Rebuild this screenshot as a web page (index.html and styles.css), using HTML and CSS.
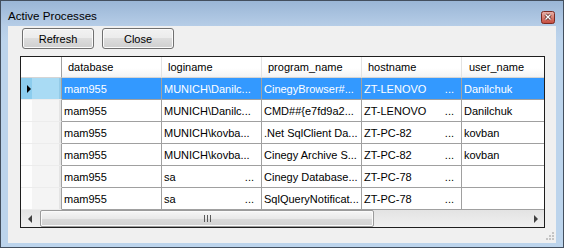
FILE: index.html
```html
<!DOCTYPE html>
<html lang="en">
  <head>
    <meta charset="UTF-8" />
    <title>Active Processes</title>
    <link rel="stylesheet" href="styles.css">
  </head>
  <body>
    <div class="window">
      <div class="titlebar">
        <span class="title">Active Processes</span>
        <span class="close-x">
          <svg width="14" height="13" viewBox="0 0 14 13">
            <defs>
              <linearGradient id="xg" x1="0" y1="0" x2="0" y2="1">
                <stop offset="0" stop-color="#e9b3ab" />
                <stop offset="0.5" stop-color="#d77e71" />
                <stop offset="1" stop-color="#c5483b" />
              </linearGradient>
            </defs>
            <rect x="0.5" y="0.5" width="13" height="12" rx="2" fill="url(#xg)" stroke="#7b2a22" />
            <path d="M4.5 3.5 L9.5 8.5 M9.5 3.5 L4.5 8.5" stroke="#5b2a26" stroke-width="3" />
            <path d="M4.5 3.5 L9.5 8.5 M9.5 3.5 L4.5 8.5" stroke="#ffffff" stroke-width="1.4" />
          </svg>
        </span>
      </div>
      <div class="client">
        <div class="toolbar">
          <button class="btn">Refresh</button>
          <button class="btn">Close</button>
        </div>
        <div class="grid">
          <div class="row head">
            <div class="cell rowhead"></div>
            <div class="cell">database</div>
            <div class="cell">loginame</div>
            <div class="cell">program_name</div>
            <div class="cell">hostname</div>
            <div class="cell last">user_name</div>
          </div>
          <div class="row selected">
            <div class="cell rowhead"><span class="pointer"></span></div>
            <div class="cell">mam955</div>
            <div class="cell">MUNICH\Danilc...</div>
            <div class="cell">CinegyBrowser#...</div>
            <div class="cell split"><span>ZT-LENOVO</span><span>...</span></div>
            <div class="cell last">Danilchuk</div>
          </div>
          <div class="row">
            <div class="cell rowhead"></div>
            <div class="cell">mam955</div>
            <div class="cell">MUNICH\Danilc...</div>
            <div class="cell">CMD##{e7fd9a2...</div>
            <div class="cell split"><span>ZT-LENOVO</span><span>...</span></div>
            <div class="cell last">Danilchuk</div>
          </div>
          <div class="row">
            <div class="cell rowhead"></div>
            <div class="cell">mam955</div>
            <div class="cell">MUNICH\kovba...</div>
            <div class="cell">.Net SqlClient Da...</div>
            <div class="cell split"><span>ZT-PC-82</span><span>...</span></div>
            <div class="cell last">kovban</div>
          </div>
          <div class="row">
            <div class="cell rowhead"></div>
            <div class="cell">mam955</div>
            <div class="cell">MUNICH\kovba...</div>
            <div class="cell">Cinegy Archive S...</div>
            <div class="cell split"><span>ZT-PC-82</span><span>...</span></div>
            <div class="cell last">kovban</div>
          </div>
          <div class="row">
            <div class="cell rowhead"></div>
            <div class="cell">mam955</div>
            <div class="cell split"><span>sa</span><span>...</span></div>
            <div class="cell">Cinegy Database...</div>
            <div class="cell split"><span>ZT-PC-78</span><span>...</span></div>
            <div class="cell last"></div>
          </div>
          <div class="row">
            <div class="cell rowhead"></div>
            <div class="cell">mam955</div>
            <div class="cell split"><span>sa</span><span>...</span></div>
            <div class="cell">SqlQueryNotificat...</div>
            <div class="cell split"><span>ZT-PC-78</span><span>...</span></div>
            <div class="cell last"></div>
          </div>
          <div class="hscroll">
            <span class="arrow"><span class="tri-left"></span></span>
            <div class="track">
              <div class="thumb"><span class="grip-lines"></span></div>
            </div>
            <span class="arrow"><span class="tri-right"></span></span>
          </div>
        </div>
        <svg class="size-grip" width="10" height="10" viewBox="0 0 10 10">
          <rect x="7" y="1" width="2" height="2" fill="#c4c4c4" />
          <rect x="4" y="4" width="2" height="2" fill="#c4c4c4" />
          <rect x="7" y="4" width="2" height="2" fill="#c4c4c4" />
          <rect x="1" y="7" width="2" height="2" fill="#c4c4c4" />
          <rect x="4" y="7" width="2" height="2" fill="#c4c4c4" />
          <rect x="7" y="7" width="2" height="2" fill="#c4c4c4" />
        </svg>
      </div>
    </div>
  </body>
</html>
```

FILE: styles.css
```css
* {
  padding: 0;
  margin: 0;
  box-sizing: border-box;
}
body {
  background-color: #ffffff;
  font-family: "Liberation Sans", Arial, sans-serif;
  font-size: 11px;
}
.window {
  display: flex;
  flex-direction: column;
  width: 564px;
  height: 248px;
  border: 1px solid #434f5e;
  padding: 0 7px 4px 7px;
  background: linear-gradient(#9ab6d6, #b6cde7 25px, #bcd4ec 40px, #bcd4ec);
}
.titlebar {
  display: flex;
  justify-content: space-between;
  align-items: flex-start;
  height: 25px;
}
.title {
  padding-top: 8px;
  font-size: 11.6px;
  line-height: 14px;
  color: #000000;
}
.close-x {
  display: block;
  width: 14px;
  height: 13px;
  margin-top: 10px;
  margin-right: 1px;
}
.close-x svg {
  display: block;
}
.client {
  position: relative;
  flex: 1;
  padding: 2px 0 0 12px;
  background-color: #f0f0f0;
}
/* buttons */
.toolbar {
  display: flex;
  gap: 8px;
  margin-left: 2px;
  margin-bottom: 7px;
}
.btn {
  width: 72px;
  height: 21px;
  border: 1px solid #707070;
  border-radius: 3px;
  background: linear-gradient(#f2f2f2, #ebebeb 50%, #dddddd 50%, #cfcfcf);
  box-shadow: inset 0 0 0 1px #fbfbfb;
  font-family: "Liberation Sans", Arial, sans-serif;
  font-size: 11px;
  color: #000000;
}
/* grid */
.grid {
  width: 525px;
  height: 172px;
  border: 1px solid #1e1e1e;
  background-color: #ffffff;
  overflow: hidden;
}
.row {
  display: grid;
  grid-template-columns: 41px 100px 100px 100px 100px 82px;
  height: 22px;
}
.cell {
  display: flex;
  align-items: center;
  padding: 0 7px 0 2px;
  border-right: 1px solid #a0a0a0;
  border-bottom: 1px solid #a0a0a0;
  white-space: nowrap;
  overflow: hidden;
  color: #000000;
}
.cell.last {
  border-right: none;
}
.split {
  justify-content: space-between;
}
.rowhead {
  position: relative;
  padding: 0;
  border-right-color: #a0a0a0;
  border-bottom-color: #ececec;
  background: linear-gradient(to right, #fdfdfd 0 11px, #f4f4f4 11px 38px, #e4e4e4 38px);
}
.row.head {
  height: 21px;
}
.head .cell {
  padding-left: 6px;
  border-right-color: #e3e3e3;
  border-bottom-color: #d5d5d5;
  background: linear-gradient(#ffffff, #ffffff 55%, #f3f3f3);
}
.head .cell.last {
  padding-left: 7px;
}
.head .rowhead {
  border-right-color: #a0a0a0;
  background: #ffffff;
}
.selected .cell {
  background-color: #3399ff;
  color: #ffffff;
}
.selected .rowhead {
  background: linear-gradient(to right, #8ccdee 0 11px, #a9dbf4 11px 38px, #93cbe8 38px);
}
.pointer {
  position: absolute;
  left: 6px;
  top: 7px;
  width: 0;
  height: 0;
  border-top: 4px solid transparent;
  border-bottom: 4px solid transparent;
  border-left: 4px solid #000000;
}
/* horizontal scrollbar */
.hscroll {
  display: flex;
  height: 17px;
  background: linear-gradient(#e3e3e3, #f0f0f0);
}
.arrow {
  display: flex;
  align-items: center;
  justify-content: center;
  width: 17px;
}
.tri-left {
  width: 0;
  height: 0;
  border-top: 4px solid transparent;
  border-bottom: 4px solid transparent;
  border-right: 4px solid #404040;
}
.tri-right {
  width: 0;
  height: 0;
  border-top: 4px solid transparent;
  border-bottom: 4px solid transparent;
  border-left: 4px solid #404040;
}
.track {
  flex: 1;
  padding: 0 1px;
}
.thumb {
  display: flex;
  align-items: center;
  justify-content: center;
  width: 334px;
  height: 17px;
  margin-left: 1px;
  border: 1px solid #9b9b9b;
  border-radius: 2px;
  background: linear-gradient(#f6f6f6, #e9e9e9 50%, #dadada 50%, #d2d2d2);
  box-shadow: inset 0 0 0 1px #fafafa;
}
.grip-lines {
  width: 7px;
  height: 7px;
  background: repeating-linear-gradient(to right, #5a5a5a 0 1px, transparent 1px 3px);
}
.size-grip {
  position: absolute;
  right: 1px;
  bottom: 2px;
}
```
